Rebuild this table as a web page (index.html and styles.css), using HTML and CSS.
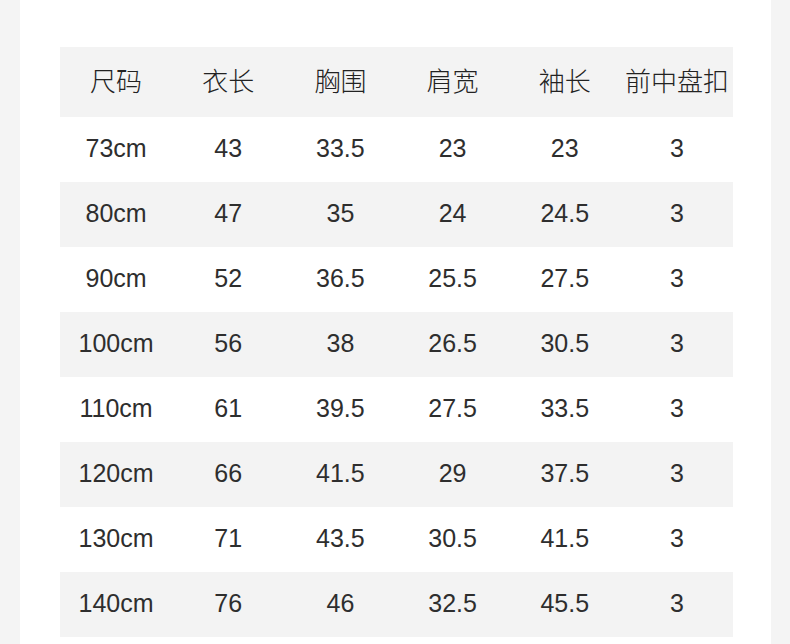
FILE: index.html
```html
<!DOCTYPE html>
<html lang="zh">
<head>
<meta charset="utf-8">
<link rel="stylesheet" href="styles.css">
</head>
<body>
<div class="page">
  <div class="side"></div>
  <div class="main">
    <div class="table">
      <div class="row head"><div>尺码</div><div>衣长</div><div>胸围</div><div>肩宽</div><div>袖长</div><div>前中盘扣</div></div>
      <div class="row"><div>73cm</div><div>43</div><div>33.5</div><div>23</div><div>23</div><div>3</div></div>
      <div class="row alt"><div>80cm</div><div>47</div><div>35</div><div>24</div><div>24.5</div><div>3</div></div>
      <div class="row"><div>90cm</div><div>52</div><div>36.5</div><div>25.5</div><div>27.5</div><div>3</div></div>
      <div class="row alt"><div>100cm</div><div>56</div><div>38</div><div>26.5</div><div>30.5</div><div>3</div></div>
      <div class="row"><div>110cm</div><div>61</div><div>39.5</div><div>27.5</div><div>33.5</div><div>3</div></div>
      <div class="row alt"><div>120cm</div><div>66</div><div>41.5</div><div>29</div><div>37.5</div><div>3</div></div>
      <div class="row"><div>130cm</div><div>71</div><div>43.5</div><div>30.5</div><div>41.5</div><div>3</div></div>
      <div class="row alt"><div>140cm</div><div>76</div><div>46</div><div>32.5</div><div>45.5</div><div>3</div></div>
    </div>
  </div>
  <div class="side right"></div>
</div>
</body>
</html>
```
FILE: styles.css
```css
html, body {
  margin: 0;
  padding: 0;
  background: #ffffff;
}
.page {
  display: flex;
  width: 790px;
  height: 644px;
  overflow: hidden;
}
.side {
  width: 20px;
  background: #f4f4f4;
  flex: none;
}
.side.right {
  width: 19px;
}
.main {
  flex: 1;
  background: #ffffff;
  padding: 47px 0 0 40px;
}
.table {
  width: 673px;
  font-family: "Liberation Sans", "Noto Sans CJK SC", sans-serif;
  font-size: 25px;
  color: #2e2e2e;
}
.row {
  display: grid;
  grid-template-columns: repeat(6, 1fr);
  height: 65px;
  align-items: center;
  text-align: center;
}
.row > div {
  padding-bottom: 3px;
}
.row.head {
  height: 70px;
  background: #f3f3f3;
  font-family: "Noto Sans CJK SC", sans-serif;
  font-size: 26px;
  font-weight: 300;
  color: #222;
}
.row.head > div {
  padding-bottom: 5px;
}
.row.alt {
  background: #f3f3f3;
}
```
